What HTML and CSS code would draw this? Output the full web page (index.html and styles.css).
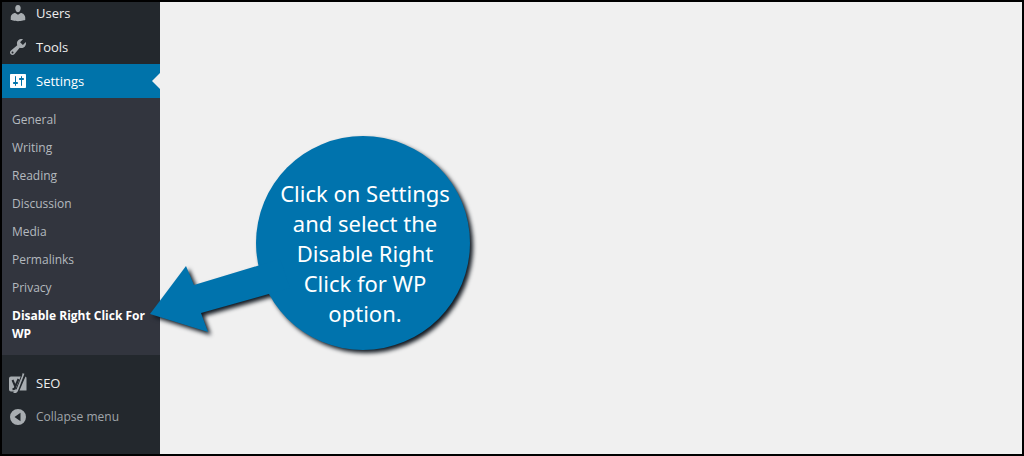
FILE: index.html
```html
<!DOCTYPE html>
<html lang="en">
<head>
<meta charset="utf-8">
<title>Settings</title>
<link rel="stylesheet" href="styles.css">
</head>
<body>
<div class="frame">
  <nav class="sidebar" aria-label="Admin menu">
    <ul class="menu">
      <li><a class="item" href="#">
        <svg class="icon" viewBox="0 0 20 20"><path d="M10 9.25c-2.27 0-2.73-3.44-2.73-3.44C7 4.02 7.82 2 9.97 2c2.16 0 2.98 2.02 2.71 3.81 0 0-.41 3.44-2.68 3.44zm0 2.57L12.72 10c2.39 0 4.52 2.33 4.52 4.53v2.49s-3.65 1.13-7.24 1.13c-3.65 0-7.24-1.13-7.24-1.13v-2.49c0-2.25 1.94-4.48 4.47-4.48z"/></svg>
        <span>Users</span></a></li>
      <li><a class="item" href="#">
        <svg class="icon" viewBox="0 0 20 20"><path d="M16.68 9.77c-1.34 1.34-3.3 1.67-4.95.99l-5.41 6.52c-.99.99-2.59.99-3.58 0s-.99-2.59 0-3.57l6.52-5.42c-.68-1.65-.35-3.61.99-4.95 1.28-1.28 3.12-1.62 4.72-1.06l-2.89 2.89 2.82 2.82 2.86-2.87c.53 1.58.18 3.39-1.08 4.65zM3.81 16.21c.4.39 1.04.39 1.43 0 .4-.4.4-1.04 0-1.43-.39-.4-1.03-.4-1.43 0-.39.39-.39 1.03 0 1.43z"/></svg>
        <span>Tools</span></a></li>
      <li><a class="item current" href="#" aria-current="page">
        <svg class="icon" viewBox="0 0 20 20"><path fill-rule="evenodd" d="M18 16V4c0-.55-.45-1-1-1H3c-.55 0-1 .45-1 1v12c0 .55.45 1 1 1h14c.55 0 1-.45 1-1zM8 11h1c.55 0 1 .45 1 1s-.45 1-1 1H8v1.5c0 .28-.22.5-.5.5s-.5-.22-.5-.5V13H6c-.55 0-1-.45-1-1s.45-1 1-1h1V5.5c0-.28.22-.5.5-.5s.5.22.5.5V11zM13 9h-1c-.55 0-1-.45-1-1s.45-1 1-1h1V5.5c0-.28.22-.5.5-.5s.5.22.5.5V7h1c.55 0 1 .45 1 1s-.45 1-1 1h-1v5.5c0 .28-.22.5-.5.5s-.5-.22-.5-.5V9z"/></svg>
        <span>Settings</span></a>
        <ul class="submenu">
          <li><a href="#">General</a></li>
          <li><a href="#">Writing</a></li>
          <li><a href="#">Reading</a></li>
          <li><a href="#">Discussion</a></li>
          <li><a href="#">Media</a></li>
          <li><a href="#">Permalinks</a></li>
          <li><a href="#">Privacy</a></li>
          <li><a class="selected" href="#">Disable Right Click For WP</a></li>
        </ul>
      </li>
      <li class="separated"><a class="item" href="#">
        <svg class="icon" viewBox="0 0 20 20"><path d="M3 3.500h11.500L9 18.500H3A2 2 0 0 1 1 16.500V5.500A2 2 0 0 1 3 3.500zM17.500 3.500A2 2 0 0 1 18.500 5.500V17.500H11.500z"/><path class="cut" d="M4.500 7l2.800 6.500q.2 2.500-2.800 2.800M7.300 13.500L10.500 6"/><path class="stroke" d="M15.500 .5L9 17.500q-1 2-3.500 2"/><path class="cut thin" d="M14 1.500L8 16.500"/></svg>
        <span>SEO</span></a></li>
      <li><button class="item collapse" type="button">
        <svg class="icon" viewBox="0 0 20 20"><path fill-rule="evenodd" d="M10 2a8 8 0 1 0 0 16 8 8 0 0 0 0-16zM12.500 5.800v8.400L6.500 10z"/></svg>
        <span>Collapse menu</span></button></li>
    </ul>
  </nav>
  <main class="content"></main>
  <aside class="callout">
    <svg class="shape" viewBox="0 0 340 230" aria-hidden="true">
      <circle cx="223" cy="113" r="107"/>
      <path d="M10 184L46 136L54 155L140 129L150 158L61 183L68 202z"/>
    </svg>
    <p class="note">Click on Settings<br>and select the<br>Disable Right<br>Click for WP<br>option.</p>
  </aside>
</div>
</body>
</html>
```
FILE: styles.css
```css
* { box-sizing: border-box; }

body {
  margin: 0;
  font: 13px/18px "Open Sans", "Noto Sans", sans-serif;
}

ul { margin: 0; padding: 0; list-style: none; }

.frame {
  position: relative;
  display: flex;
  min-height: 100vh;
  border: 2px solid #000;
  background: #f0f0f0;
}

.sidebar {
  flex: 0 0 158px;
  overflow: hidden;
  background: #23282d;
}

/* The list is scrolled slightly past its first entry. */
.menu { margin-top: -6px; }

.item {
  position: relative;
  display: flex;
  align-items: center;
  gap: 8px;
  width: 100%;
  height: 34px;
  padding: 0 6px;
  border: 0;
  background: none;
  color: #eee;
  font: inherit;
  text-decoration: none;
}

.icon {
  flex: none;
  width: 20px;
  height: 20px;
  fill: #a8adb1;
}

.current { background: #0073aa; color: #fff; }
.current .icon { fill: #fff; }

.current::after {
  content: "";
  position: absolute;
  top: 9px;
  right: 0;
  border: 8px solid transparent;
  border-left: 0;
  border-right-color: #f0f0f0;
}

.submenu {
  padding: 8px 0 7px;
  background: #32353e;
}

.submenu a {
  display: block;
  padding: 5px 10px;
  color: #b4b9be;
  font-size: 12px;
  text-decoration: none;
}

.submenu .selected { color: #fff; font-weight: 700; }

.separated { margin-top: 11px; }

.collapse { color: #a0a5aa; font-size: 12px; }

.cut { fill: none; stroke: #23282d; stroke-width: 2; }
.thin { stroke-width: 1; }
.stroke { fill: none; stroke: #a8adb1; stroke-width: 2; }

.content { flex: 1; }

.callout {
  position: absolute;
  top: 128px;
  left: 138px;
  width: 340px;
}

.shape {
  display: block;
  overflow: visible;
  fill: #0073ad;
  filter: drop-shadow(3px 3px 2px #111820);
}

.note {
  position: absolute;
  top: 48px;
  left: 118px;
  width: 214px;
  margin: 0;
  color: #fff;
  font: 22px/30px "Noto Sans", sans-serif;
  text-align: center;
}
```
